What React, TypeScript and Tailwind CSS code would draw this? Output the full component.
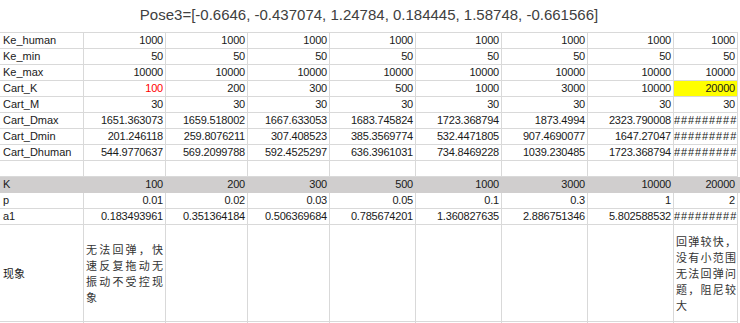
const cols = ['w-[84px]', 'w-[82px]', 'w-[82px]', 'w-[82px]', 'w-[86px]', 'w-[86px]', 'w-[86px]', 'w-[86px]', 'w-[64px]']

type Row = { label: string; values: string[]; grey?: boolean }

const rows: Row[] = [
  { label: 'Ke_human', values: ['1000', '1000', '1000', '1000', '1000', '1000', '1000', '1000'] },
  { label: 'Ke_min', values: ['50', '50', '50', '50', '50', '50', '50', '50'] },
  { label: 'Ke_max', values: ['10000', '10000', '10000', '10000', '10000', '10000', '10000', '10000'] },
  { label: 'Cart_K', values: ['100', '200', '300', '500', '1000', '3000', '10000', '20000'] },
  { label: 'Cart_M', values: ['30', '30', '30', '30', '30', '30', '30', '30'] },
  { label: 'Cart_Dmax', values: ['1651.363073', '1659.518002', '1667.633053', '1683.745824', '1723.368794', '1873.4994', '2323.790008', '#########'] },
  { label: 'Cart_Dmin', values: ['201.246118', '259.8076211', '307.408523', '385.3569774', '532.4471805', '907.4690077', '1647.27047', '#########'] },
  { label: 'Cart_Dhuman', values: ['544.9770637', '569.2099788', '592.4525297', '636.3961031', '734.8469228', '1039.230485', '1723.368794', '#########'] },
  { label: '', values: ['', '', '', '', '', '', '', ''] },
  { label: 'K', values: ['100', '200', '300', '500', '1000', '3000', '10000', '20000'], grey: true },
  { label: 'p', values: ['0.01', '0.02', '0.03', '0.05', '0.1', '0.3', '1', '2'] },
  { label: 'a1', values: ['0.183493961', '0.351364184', '0.506369684', '0.785674201', '1.360827635', '2.886751346', '5.802588532', '#########'] },
]

function Lines({ lines, track }: { lines: string[]; track: string }) {
  return (
    <div className={`flex flex-col text-[11px] leading-[16px] text-[#333] ${track}`}>
      {lines.map((l, i) => (
        <div key={i} className={i < lines.length - 1 ? 'text-justify [text-align-last:justify]' : ''}>
          {l}
        </div>
      ))}
    </div>
  )
}

export default function App() {
  return (
    <div className="w-[740px] h-[323px] bg-white overflow-hidden text-[#1a1a1a] font-['Liberation_Sans','Noto_Sans_CJK_SC',sans-serif]">
      <div className="w-[738px] h-[33px] border-b border-[#d9d9d9] flex items-center justify-center text-[15px] text-[#404040] pb-[1px]">
        Pose3=[-0.6646, -0.437074, 1.24784, 0.184445, 1.58748, -0.661566]
      </div>

      {rows.map((row, r) => (
        <div key={r} className={`flex h-[16px] ${row.grey ? 'bg-[#d0cece]' : ''}`}>
          <div className={`${cols[0]} h-full border-b border-r ${row.grey ? 'border-[#d0cece]' : 'border-[#d9d9d9]'} pl-[3px] text-[11px] leading-[15px]`}>
            {row.label}
          </div>
          {row.values.map((v, c) => {
            const hashes = v.startsWith('#')
            const red = row.label === 'Cart_K' && c === 0
            const yellow = row.label === 'Cart_K' && c === 7
            return (
              <div
                key={c}
                className={`${cols[c + 1]} h-full border-b border-r ${row.grey ? 'border-[#d0cece]' : 'border-[#d9d9d9]'} text-[11px] leading-[15px] whitespace-nowrap overflow-hidden ${
                  hashes ? 'text-left pl-[0px] tracking-[0.9px]' : 'text-right pr-[2px] tracking-[-0.2px]'
                } ${red ? 'text-[#ff0000]' : ''} ${yellow ? 'bg-[#ffff00]' : ''}`}
              >
                {v}
              </div>
            )
          })}
        </div>
      ))}

      <div className="flex h-[97px]">
        <div className={`${cols[0]} h-full border-b border-r border-[#d9d9d9] pl-[3px] flex items-center text-[11px] font-['Noto_Sans_CJK_SC',sans-serif]`}>
          现象
        </div>
        <div className={`${cols[1]} h-full border-b border-r border-[#d9d9d9] pl-[2px] pr-[2px] flex items-center font-['Noto_Sans_CJK_SC',sans-serif]`}>
          <div className="w-full">
            <Lines lines={['无法回弹，快', '速反复拖动无', '振动不受控现', '象']} track="" />
          </div>
        </div>
        {[2, 3, 4, 5, 6, 7].map((c) => (
          <div key={c} className={`${cols[c]} h-full border-b border-r border-[#d9d9d9]`} />
        ))}
        <div className={`${cols[8]} h-full border-b border-r border-[#d9d9d9] pl-[2px] pr-[1px] flex items-center font-['Noto_Sans_CJK_SC',sans-serif]`}>
          <div className="w-full">
            <Lines lines={['回弹较快，', '没有小范围', '无法回弹问', '题，阻尼较', '大']} track="" />
          </div>
        </div>
      </div>
      <div className="flex h-[10px]">
        {cols.map((w, c) => (
          <div key={c} className={`${w} h-full border-r border-[#d9d9d9]`} />
        ))}
      </div>
    </div>
  )
}
